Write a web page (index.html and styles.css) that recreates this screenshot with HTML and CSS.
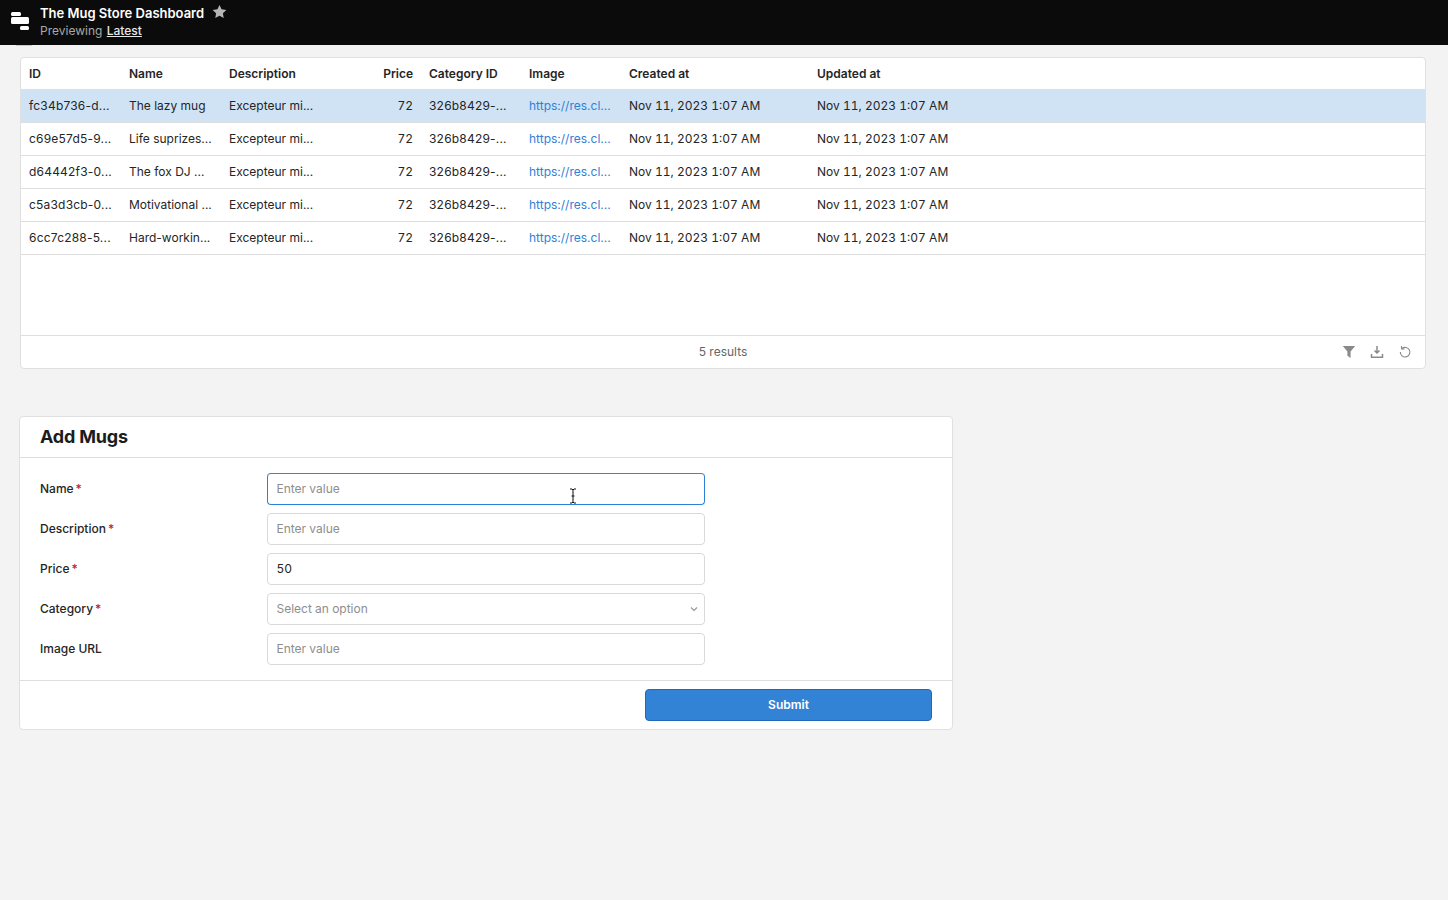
FILE: index.html
```html
<!DOCTYPE html>
<html lang="en">
<head>
<meta charset="utf-8">
<title>The Mug Store Dashboard</title>
<link rel="stylesheet" href="styles.css">
</head>
<body>
<header class="topbar">
  <svg class="logo" width="20" height="20" viewBox="0 0 20 20"><rect x="1" y="2" width="10" height="4" rx="1.500" fill="#fff"/><rect x="1" y="7" width="18" height="7" rx="1.500" fill="#fff"/><rect x="10" y="16" width="9" height="4" rx="1.500" fill="#fff"/></svg>
  <div class="titles">
    <div class="title-row"><span class="app-title">The Mug Store Dashboard</span>
      <svg class="star" width="15" height="15" viewBox="0 0 24 24"><path d="M12 1.500l3.300 7 7.700 1-5.600 5.300 1.400 7.600-6.800-3.700-6.800 3.700 1.400-7.600L1 9.500l7.700-1z" fill="#b5b5b5"/></svg>
    </div>
    <div class="subtitle">Previewing <u class="release">Latest</u></div>
  </div>
</header>
<div class="tab-stub"></div>
<main class="page">
  <section class="card table-card">
    <table class="grid">
      <colgroup><col class="c1"><col class="c1"><col class="c1"><col class="c1"><col class="c1"><col class="c1"><col class="c2"><col></colgroup>
      <thead><tr><th>ID</th><th>Name</th><th>Description</th><th class="num">Price</th><th>Category ID</th><th>Image</th><th>Created at</th><th>Updated at</th></tr></thead>
      <tbody>
        <tr class="selected"><td class="uuid">fc34b736-d...</td><td>The lazy mug</td><td>Excepteur mi...</td><td class="num">72</td><td class="uuid">326b8429-...</td><td class="link">https://res.cl...</td><td class="date">Nov 11, 2023 1:07 AM</td><td class="date">Nov 11, 2023 1:07 AM</td></tr>
        <tr><td class="uuid">c69e57d5-9...</td><td>Life suprizes...</td><td>Excepteur mi...</td><td class="num">72</td><td class="uuid">326b8429-...</td><td class="link">https://res.cl...</td><td class="date">Nov 11, 2023 1:07 AM</td><td class="date">Nov 11, 2023 1:07 AM</td></tr>
        <tr><td class="uuid">d64442f3-0...</td><td>The fox DJ ...</td><td>Excepteur mi...</td><td class="num">72</td><td class="uuid">326b8429-...</td><td class="link">https://res.cl...</td><td class="date">Nov 11, 2023 1:07 AM</td><td class="date">Nov 11, 2023 1:07 AM</td></tr>
        <tr><td class="uuid">c5a3d3cb-0...</td><td>Motivational ...</td><td>Excepteur mi...</td><td class="num">72</td><td class="uuid">326b8429-...</td><td class="link">https://res.cl...</td><td class="date">Nov 11, 2023 1:07 AM</td><td class="date">Nov 11, 2023 1:07 AM</td></tr>
        <tr><td class="uuid">6cc7c288-5...</td><td>Hard-workin...</td><td>Excepteur mi...</td><td class="num">72</td><td class="uuid">326b8429-...</td><td class="link">https://res.cl...</td><td class="date">Nov 11, 2023 1:07 AM</td><td class="date">Nov 11, 2023 1:07 AM</td></tr>
      </tbody>
    </table>
    <div class="table-spacer"></div>
    <footer class="table-footer">
      <span class="results">5 results</span>
      <div class="tools">
        <svg width="14" height="14" viewBox="0 0 14 14"><path d="M.800 1h12.400L8.600 6.500V13L5.400 10.800V6.500z" fill="#8a8a8a"/></svg>
        <svg width="14" height="14" viewBox="0 0 14 14"><path d="M7 1v7M4.500 5.500L7 8l2.500-2.500" fill="none" stroke="#8a8a8a" stroke-width="1.500"/><path d="M1.500 9v3.200h11V9" fill="none" stroke="#8a8a8a" stroke-width="1.500"/></svg>
        <svg width="14" height="14" viewBox="0 0 14 14"><path d="M4 3.500a4.800 4.800 0 1 1-1.700 3.500M3.500 1v3h3" fill="none" stroke="#8c8c8c" stroke-width="1.100"/></svg>
      </div>
    </footer>
  </section>

  <section class="card form-card">
    <h2 class="form-title">Add Mugs</h2>
    <form class="form-body">
      <div class="field"><label class="label">Name<span class="req">*</span></label><div class="input focus placeholder">Enter value<svg class="cursor" width="8" height="16" viewBox="0 0 8 16"><path d="M1 1h2l1 1 1-1h2M4 2v12M1 15h2l1-1 1 1h2M2.500 8h3" fill="none" stroke="#111" stroke-width="1"/></svg></div></div>
      <div class="field"><label class="label">Description<span class="req">*</span></label><div class="input placeholder">Enter value</div></div>
      <div class="field"><label class="label">Price<span class="req">*</span></label><div class="input">50</div></div>
      <div class="field"><label class="label">Category<span class="req">*</span></label><div class="input placeholder select">Select an option<svg width="8" height="6" viewBox="0 0 8 6"><path d="M1 1.500l3 3 3-3" fill="none" stroke="#999" stroke-width="1.200"/></svg></div></div>
      <div class="field"><label class="label">Image URL</label><div class="input placeholder">Enter value</div></div>
    </form>
    <footer class="form-footer"><button class="submit" type="button">Submit</button></footer>
  </section>
</main>
</body>
</html>
```

FILE: styles.css
```css
* { box-sizing: border-box; }
html, body { margin: 0; height: 100%; }
body {
  background: #f3f3f3;
  color: #252525;
  font-family: Inter, "Liberation Sans", sans-serif;
  font-size: 12px;
  overflow: hidden;
}
.topbar {
  height: 45px;
  background: #0b0b0b;
  display: flex;
  align-items: flex-start;
  padding: 3px 0 0 10px;
  gap: 10px;
}
.logo { margin-top: 7px; }
.titles { line-height: 18px; }
.title-row { display: flex; align-items: center; gap: 8px; height: 19px; }
.app-title { color: #fff; font-weight: 600; font-size: 13px; }
.star { margin-top: -3px; margin-left: 0; }
.subtitle { color: #a8a8a8; font-size: 12px; }
.release { color: #e8e8e8; font-weight: 500; margin-left: 1px; }
.tab-stub { width: 16px; height: 1px; margin-left: 16px; background: #c9c9c9; }
.page { padding: 11px 22px 0 20px; }
.card {
  background: #fff;
  border: 1px solid #e0e0e0;
  border-radius: 4px;
}
.table-card { height: 312px; display: flex; flex-direction: column; overflow: hidden; }
.grid { width: 100%; table-layout: fixed; border-collapse: collapse; }
.c1 { width: 100px; }
.c2 { width: 188px; }
.grid th, .grid td { padding: 0 8px; text-align: left; white-space: nowrap; overflow: hidden; }
.grid th { height: 31px; font-weight: 600; font-size: 12px; }
.grid td { height: 33px; border-bottom: 1px solid #dedede; }
.grid th.num, .grid td.num { text-align: right; }
.grid td.date, .grid td.num { font-variant-numeric: tabular-nums; }
.grid td.uuid { letter-spacing: 0.2px; }
.selected td { background: #d0e3f5; }
.link { color: #2f80d8; }
.table-spacer { flex: 1; }
.table-footer {
  height: 33px;
  border-top: 1px solid #dedede;
  padding-bottom: 2px;
  display: flex;
  align-items: center;
  justify-content: center;
  position: relative;
}
.results { color: #666; }
.tools { position: absolute; right: 13px; top: 9px; display: flex; gap: 14px; }
.tools svg { display: block; }
.form-card {
  width: 934px;
  height: 314px;
  margin: 47px 0 0 -1px;
  display: flex;
  flex-direction: column;
}
.form-title {
  margin: 0;
  height: 41px;
  padding-left: 20px;
  border-bottom: 1px solid #dedede;
  font-size: 18px;
  font-weight: 700;
  letter-spacing: -0.2px;
  line-height: 39px;
  color: #1c1c1c;
}
.form-body { padding: 15px 0 0 20px; display: flex; flex-direction: column; gap: 8px; height: 223px; border-bottom: 1px solid #dedede; }
.field { display: flex; align-items: center; height: 32px; }
.label { width: 227px; font-weight: 500; font-size: 12px; padding-bottom: 1px; }
.req { color: #b5223b; margin-left: 2px; }
.input {
  width: 438px;
  height: 32px;
  border: 1px solid #d9d9d9;
  border-radius: 4px;
  padding: 0 9px 1px 8.500px;
  display: flex;
  align-items: center;
  position: relative;
  font-variant-numeric: tabular-nums;
}
.placeholder { color: #8e8e8e; }
.focus { border-color: #2f80d8; border-top-color: #777; }
.select { justify-content: space-between; padding-right: 6px; }
.cursor { position: absolute; left: 301px; top: 14px; }
.form-footer { flex: 1; display: flex; justify-content: flex-end; padding: 8px 20px 0 0; }
.submit {
  width: 287px;
  height: 32px;
  padding: 0 0 1px;
  background: #3283d6;
  color: #fff;
  border: 1px solid #2069b8;
  border-radius: 4px;
  font: 600 12px Inter, "Liberation Sans", sans-serif;
}
```
